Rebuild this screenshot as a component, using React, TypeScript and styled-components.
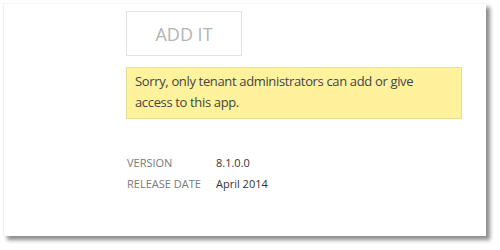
import React from "react";
import styled, { createGlobalStyle } from "styled-components";

const GlobalStyle = createGlobalStyle`
  html, body {
    margin: 0;
    padding: 0;
    background: #ffffff;
  }
  body {
    width: 500px;
    height: 250px;
    overflow: hidden;
    font-family: "Open Sans", "Noto Sans", "Liberation Sans", sans-serif;
  }
`;

const Page = styled.div`
  width: 500px;
  height: 250px;
  padding: 3px 0 0 3px;
  box-sizing: border-box;
`;

const Card = styled.div`
  width: 483px;
  height: 233px;
  box-sizing: border-box;
  background: #ffffff;
  border-top: 1px solid #f4f4f4;
  border-left: 1px solid #f0f0f0;
  box-shadow: 4px 4px 4px rgba(0, 0, 0, 0.45);
  padding: 7px 0 0 122px;
  display: flex;
  flex-direction: column;
`;

const AddButton = styled.div`
  width: 116px;
  height: 45px;
  box-sizing: border-box;
  border: 1px solid #e3e3e3;
  display: flex;
  align-items: center;
  justify-content: center;
  font-size: 18px;
  color: #b4b4b4;
`;

const Notice = styled.div`
  margin-top: 11px;
  width: 336px;
  height: 52px;
  box-sizing: border-box;
  background: #fff29c;
  border: 1px solid #e6df90;
  padding: 3px 8px 0 8px;
  font-size: 13px;
  letter-spacing: -0.35px;
  line-height: 21px;
  color: #444444;
`;

const Meta = styled.div`
  margin-top: 35px;
  margin-left: 1px;
  display: grid;
  grid-template-columns: 89px auto;
  row-gap: 4px;
  font-size: 11px;
  line-height: 17px;
`;

const Label = styled.div`
  color: #7a7a7a;
`;

const Value = styled.div`
  color: #333333;
`;

export default function App() {
  return (
    <>
      <GlobalStyle />
      <Page>
        <Card>
          <AddButton>ADD IT</AddButton>
          <Notice>
            Sorry, only tenant administrators can add or give access to this
            app.
          </Notice>
          <Meta>
            <Label>VERSION</Label>
            <Value>8.1.0.0</Value>
            <Label>RELEASE DATE</Label>
            <Value>April 2014</Value>
          </Meta>
        </Card>
      </Page>
    </>
  );
}
